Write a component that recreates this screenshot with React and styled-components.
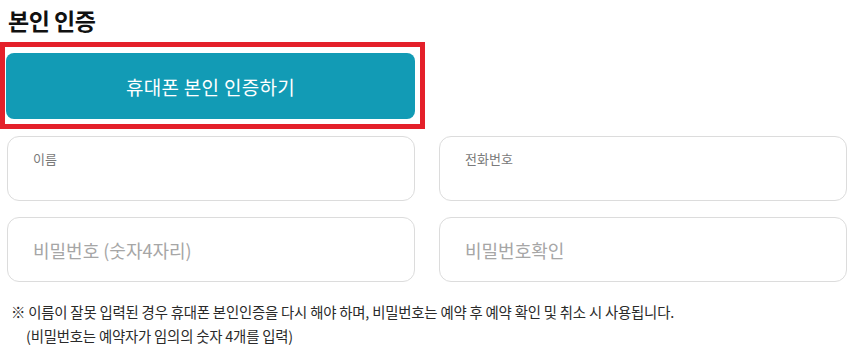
import React from 'react';
import styled, { createGlobalStyle } from 'styled-components';

const GlobalStyle = createGlobalStyle`
  body {
    margin: 0;
    background: #fff;
    font-family: 'Noto Sans CJK KR', 'Noto Sans', sans-serif;
  }
`;

const Section = styled.section`
  width: 857px;
  height: 352px;
  overflow: hidden;
`;

const Title = styled.h2`
  margin: 0;
  padding: 5px 0 0 8px;
  height: 42px;
  box-sizing: border-box;
  font-size: 23px;
  font-weight: 700;
  line-height: 30px;
  color: #111;
  letter-spacing: -0.5px;
`;

const Highlight = styled.div`
  width: 425px;
  box-sizing: border-box;
  border: 5px solid #e4202a;
  padding: 6px 5px 5px 1px;
`;

const VerifyButton = styled.button`
  display: flex;
  align-items: center;
  justify-content: center;
  width: 100%;
  height: 66px;
  border: 0;
  border-radius: 8px;
  background: #129bb5;
  color: #fff;
  font-family: inherit;
  font-size: 19px;
  font-weight: 400;
  letter-spacing: 0.3px;
  cursor: pointer;
`;

const Fields = styled.div`
  display: grid;
  grid-template-columns: 408px 408px;
  column-gap: 24px;
  row-gap: 16px;
  padding: 7px 0 0 7px;
`;

const Field = styled.div`
  display: flex;
  flex-direction: column;
  justify-content: ${({ $labelled }) => ($labelled ? 'flex-start' : 'center')};
  height: 65px;
  box-sizing: border-box;
  padding: ${({ $labelled }) => ($labelled ? '13px 25px 0' : '0 25px')};
  border: 1px solid #dcdcdc;
  border-radius: 12px;
  background: #fff;
`;

const Label = styled.span`
  font-size: 13px;
  line-height: 18px;
  color: #7a7a7a;
`;

const Placeholder = styled.span`
  font-size: 18px;
  line-height: 24px;
  color: #a6a6a6;
`;

const Notes = styled.div`
  padding: 18px 0 0 11px;
  font-size: 14.4px;
  line-height: 24px;
  color: #2a2a2a;
  letter-spacing: -0.2px;
`;

const NoteLine = styled.p`
  margin: 0;
  padding-left: ${({ $indent }) => ($indent ? '15px' : '0')};
  white-space: nowrap;
`;

export default function App() {
  return (
    <>
      <GlobalStyle />
      <Section>
        <Title>본인 인증</Title>
        <Highlight>
          <VerifyButton type="button">휴대폰 본인 인증하기</VerifyButton>
        </Highlight>
        <Fields>
          <Field $labelled>
            <Label>이름</Label>
          </Field>
          <Field $labelled>
            <Label>전화번호</Label>
          </Field>
          <Field>
            <Placeholder>비밀번호 (숫자4자리)</Placeholder>
          </Field>
          <Field>
            <Placeholder>비밀번호확인</Placeholder>
          </Field>
        </Fields>
        <Notes>
          <NoteLine>※ 이름이 잘못 입력된 경우 휴대폰 본인인증을 다시 해야 하며, 비밀번호는 예약 후 예약 확인 및 취소 시 사용됩니다.</NoteLine>
          <NoteLine $indent>(비밀번호는 예약자가 임의의 숫자 4개를 입력)</NoteLine>
        </Notes>
      </Section>
    </>
  );
}
